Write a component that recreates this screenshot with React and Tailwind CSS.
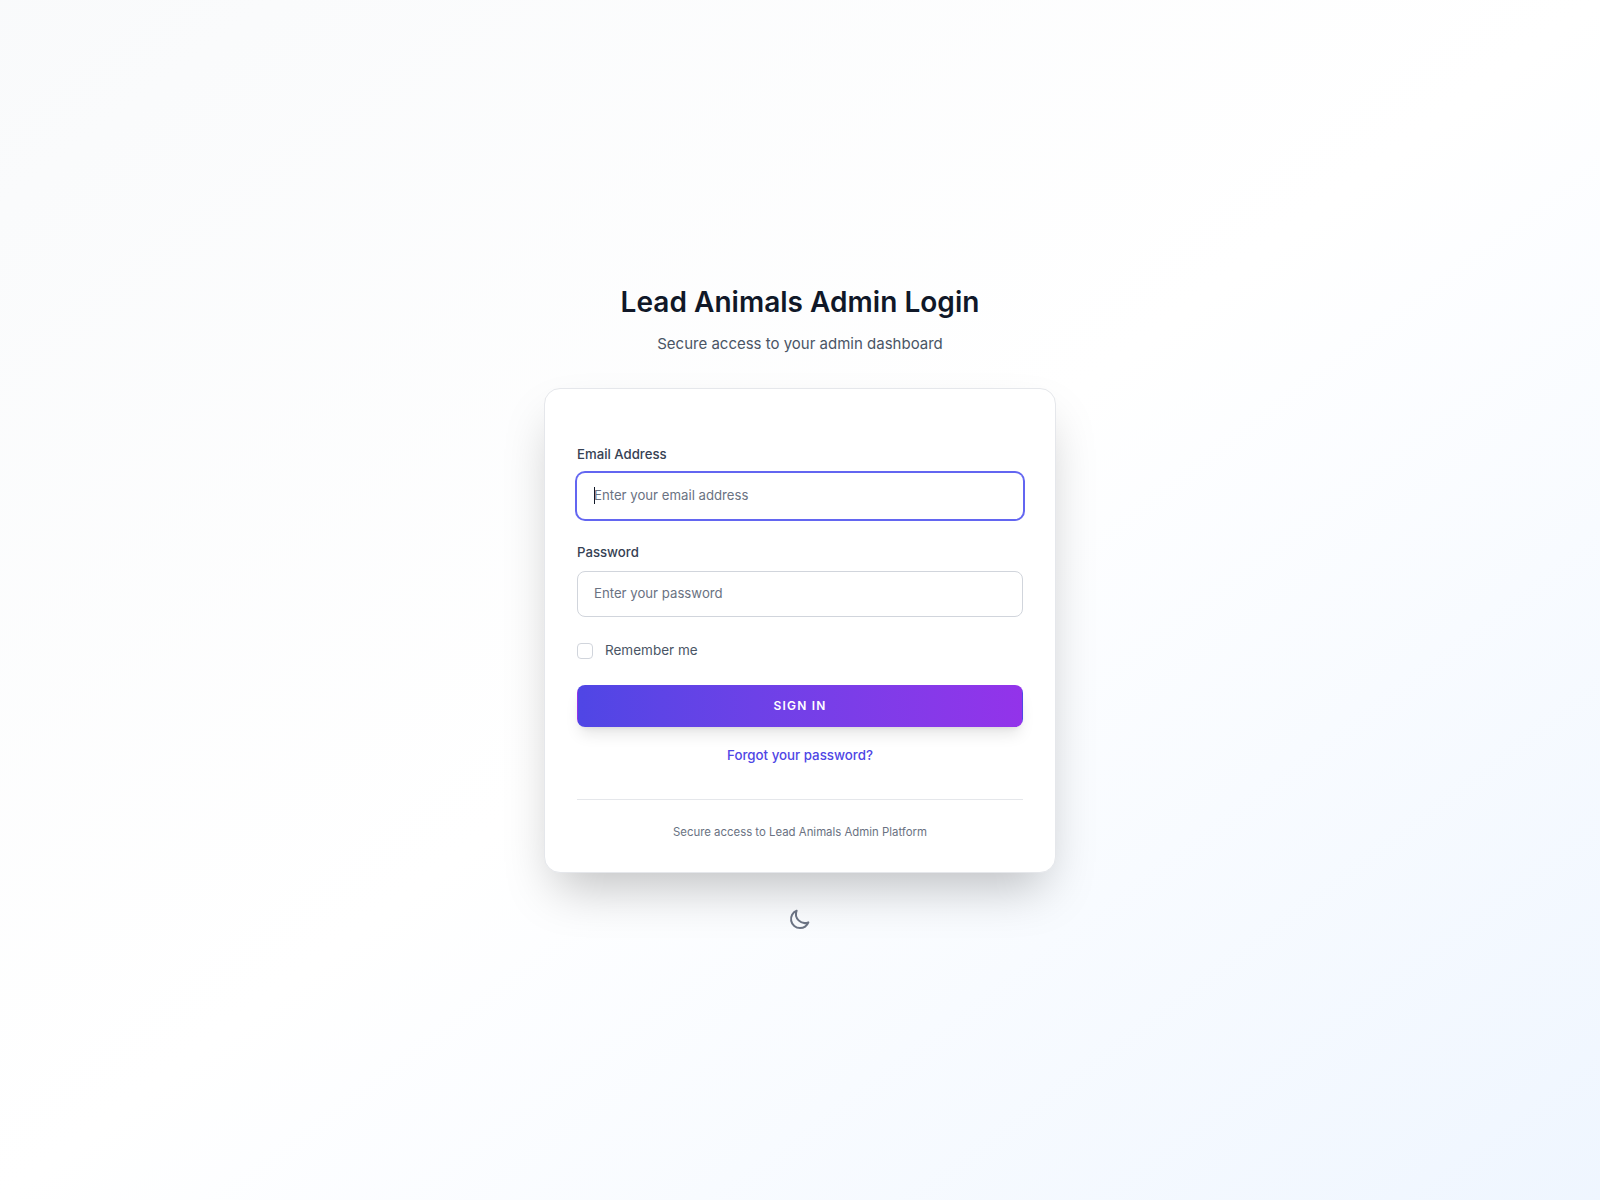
import React from "react";

export default function App() {
  return (
    <div className="min-h-screen flex flex-col items-center justify-center pt-[22px] bg-gradient-to-br from-gray-50 via-white to-blue-50 font-['Inter','Noto_Sans',sans-serif]">
      <div className="w-[512px] flex flex-col items-center">
        <h1 className="text-[28px] leading-9 font-semibold tracking-[0.03px] text-gray-900 mb-[13px]">Lead Animals Admin Login</h1>
        <p className="text-[15px] leading-[22px] text-gray-600 mb-[33px]">Secure access to your admin dashboard</p>
        <div className="w-full bg-white border border-gray-200 rounded-2xl shadow-2xl px-8 pt-14 pb-8">
          <form className="flex flex-col">
            <label className="block text-[13.2px] leading-[18px] font-medium text-gray-700 mb-[10px]">Email Address</label>
            <div className="relative">
              <input type="email" placeholder="Enter your email address" className="w-full h-[46px] px-4 pb-[2px] text-[13.2px] border border-transparent rounded-lg outline-none ring-2 ring-[#6366f1] placeholder:text-gray-500 bg-white" />
              <span className="absolute left-[17px] top-[14px] w-px h-[17px] bg-gray-900" />
            </div>
            <label className="block text-[13.2px] leading-[18px] font-medium text-gray-700 mt-6 mb-[10px]">Password</label>
            <input type="password" placeholder="Enter your password" className="w-full h-[46px] px-4 pb-[2px] text-[13.2px] border border-gray-300 rounded-lg outline-none placeholder:text-gray-500 bg-white" />
            <label className="flex items-center gap-3 mt-6 h-5 text-[13.5px] text-gray-600">
              <span className="w-4 h-4 border border-gray-300 rounded bg-white" />
              Remember me
            </label>
            <button type="button" className="mt-6 h-[42px] rounded-lg border border-transparent text-white text-xs font-semibold tracking-[1.2px] bg-gradient-to-r from-[#4f46e5] to-[#9333ea] shadow-lg">SIGN IN</button>
            <a className="mt-[18px] text-center text-[13.3px] leading-5 font-medium text-[#4f46e5]">Forgot your password?</a>
            <div className="mt-[34px] pt-[24px] border-t border-gray-200 text-center text-[11.4px] leading-4 text-gray-500">Secure access to Lead Animals Admin Platform</div>
          </form>
        </div>
        <button type="button" className="mt-[26px] p-2 rounded-full text-gray-500">
          <svg className="w-6 h-6" fill="none" viewBox="0 0 24 24" stroke="currentColor" strokeWidth="2" strokeLinecap="round" strokeLinejoin="round">
            <path d="M20.354 15.354A9 9 0 018.646 3.646 9.003 9.003 0 0012 21a9.003 9.003 0 008.354-5.646z" />
          </svg>
        </button>
      </div>
    </div>
  );
}
